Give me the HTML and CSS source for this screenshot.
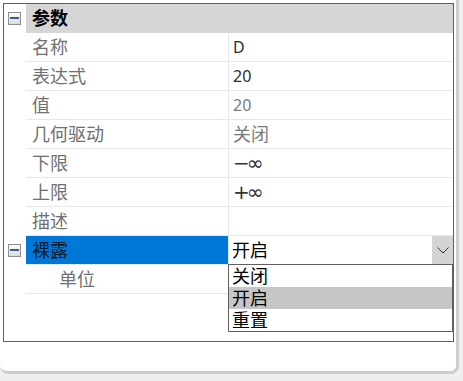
FILE: index.html
```html
<!DOCTYPE html>
<html lang="zh-CN">
<head>
    <meta charset="UTF-8">
    <meta name="viewport" content="width=device-width, initial-scale=1.0">
    <title>参数</title>
    <link rel="stylesheet" href="styles.css">
</head>
<body>
    <div class="window">
        <div class="panel">
            <div class="group-head">
                <div class="gutter"><span class="toggle"></span></div>
                <div class="head-cell">参数</div>
            </div>
            <div class="row">
                <div class="gutter"></div>
                <div class="cell name">名称</div>
                <div class="cell value num">D</div>
            </div>
            <div class="row">
                <div class="gutter"></div>
                <div class="cell name">表达式</div>
                <div class="cell value num">20</div>
            </div>
            <div class="row">
                <div class="gutter"></div>
                <div class="cell name">值</div>
                <div class="cell value num readonly">20</div>
            </div>
            <div class="row">
                <div class="gutter"></div>
                <div class="cell name">几何驱动</div>
                <div class="cell value readonly">关闭</div>
            </div>
            <div class="row">
                <div class="gutter"></div>
                <div class="cell name">下限</div>
                <div class="cell value inf">−∞</div>
            </div>
            <div class="row">
                <div class="gutter"></div>
                <div class="cell name">上限</div>
                <div class="cell value inf">+∞</div>
            </div>
            <div class="row">
                <div class="gutter"></div>
                <div class="cell name">描述</div>
                <div class="cell value"></div>
            </div>
            <div class="row">
                <div class="gutter"><span class="toggle"></span></div>
                <div class="cell name selected">裸露</div>
                <div class="cell value combo">
                    <span class="combo-text">开启</span>
                    <span class="combo-button">
                        <svg width="12" height="7" viewBox="0 0 12 7"><polyline points="0.5,0.5 6,6 11.5,0.5" fill="none" stroke="#333" stroke-width="1"/></svg>
                    </span>
                </div>
            </div>
            <div class="row">
                <div class="gutter"></div>
                <div class="cell name sub">单位</div>
                <div class="cell value"></div>
            </div>

            <ul class="dropdown">
                <li>关闭</li>
                <li class="hover">开启</li>
                <li>重置</li>
            </ul>
        </div>
    </div>
</body>
</html>
```

FILE: styles.css
```css
body {
    margin: 0;
    background-color: #efefef;
    font-family: "Noto Sans", "Noto Sans CJK SC", sans-serif;
}

.window {
    width: 456px;
    height: 371px;
    background-color: #fff;
    border-right: 3px solid #cdcdcd;
    border-bottom: 3px solid #cdcdcd;
    border-bottom-left-radius: 8px;
    border-bottom-right-radius: 8px;
    overflow: hidden;
}

.panel {
    position: relative;
    margin: 3px 0 0 3px;
    width: 449px;
    height: 337px;
    border: 1px solid #606060;
}

.group-head,
.row {
    display: flex;
}

.gutter {
    width: 22px;
    flex: none;
    display: flex;
    align-items: center;
}

.toggle {
    position: relative;
    margin-left: 4px;
    width: 11px;
    height: 11px;
    border: 1px solid #8f8f8f;
    background: linear-gradient(#fdfdfd, #dcdcdc);
}

.toggle::after {
    content: "";
    position: absolute;
    left: 1px;
    top: 4px;
    width: 9px;
    height: 2px;
    background-color: #3b5b9e;
}

.head-cell {
    flex: 1;
    height: 29px;
    line-height: 29px;
    padding-left: 6px;
    background-color: #d6d6d6;
    font-size: 18px;
    font-weight: bold;
    color: #000;
}

.cell {
    height: 28px;
    line-height: 28px;
    border-bottom: 1px solid #e8e8e8;
    font-size: 18px;
    white-space: nowrap;
}

.name {
    width: 196px;
    padding-left: 6px;
    border-right: 1px solid #e8e8e8;
    color: #707070;
}

.name.selected {
    background-color: #0078d7;
    color: #0a1a2a;
}

.name.sub {
    width: 169px;
    padding-left: 33px;
}

.value {
    flex: 1;
    padding-left: 4px;
    color: #2b2b2b;
}

.num {
    font-size: 16px;
}

.inf {
    font-family: "DejaVu Sans", sans-serif;
    font-size: 20px;
    letter-spacing: -3px;
    color: #333;
}

.readonly {
    color: #7a7a7a;
}

.combo {
    display: flex;
    padding-left: 0;
}

.combo-text {
    flex: 1;
    padding-left: 3px;
    color: #000;
}

.combo-button {
    width: 21px;
    display: flex;
    align-items: center;
    justify-content: center;
    background-color: #d4d4d4;
}

.dropdown {
    position: absolute;
    left: 224px;
    top: 260px;
    width: 223px;
    margin: 0;
    padding: 0;
    list-style: none;
    border: 1px solid #606060;
    background-color: #fff;
}

.dropdown li {
    height: 22px;
    line-height: 22px;
    padding-left: 3px;
    font-size: 18px;
    color: #000;
}

.dropdown li.hover {
    background-color: #c6c6c6;
}
```
